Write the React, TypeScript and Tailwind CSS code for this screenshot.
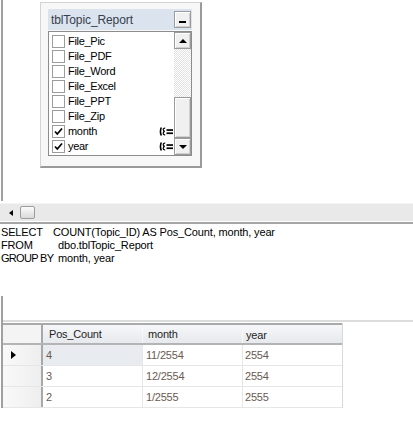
import * as React from "react"

const fields = [
  { name: "File_Pic", checked: false, group: false },
  { name: "File_PDF", checked: false, group: false },
  { name: "File_Word", checked: false, group: false },
  { name: "File_Excel", checked: false, group: false },
  { name: "File_PPT", checked: false, group: false },
  { name: "File_Zip", checked: false, group: false },
  { name: "month", checked: true, group: true },
  { name: "year", checked: true, group: true },
]

const rows = [
  { count: "4", month: "11/2554", year: "2554" },
  { count: "3", month: "12/2554", year: "2554" },
  { count: "2", month: "1/2555", year: "2555" },
]

const btn3d =
  "border border-[#9a9a9a] bg-[#f0f0f0] shadow-[inset_1px_1px_0_#ffffff,inset_-1px_-1px_0_#d0d0d0]"

function CheckMark() {
  return (
    <svg width="9" height="9" viewBox="0 0 9 9">
      <path d="M1 4.5 L3.3 7 L8 1.5" fill="none" stroke="#000" strokeWidth="1.7" />
    </svg>
  )
}

function GroupIcon() {
  return (
    <svg width="14" height="9" viewBox="0 0 14 9">
      <path d="M2.3 0.5 Q0.6 4.5 2.3 8.5" fill="none" stroke="#000" strokeWidth="1.6" />
      <path d="M6.2 1.2 Q4.2 1 4.2 2.6 Q4.2 4.2 5.8 4.3 Q4.2 4.5 4.2 6.3 Q4.2 8 6.2 7.8" fill="none" stroke="#000" strokeWidth="1.2" />
      <rect x="7.5" y="2.2" width="6.5" height="1.7" fill="#000" />
      <rect x="7.5" y="5.4" width="6.5" height="1.7" fill="#000" />
    </svg>
  )
}

function TableWindow() {
  return (
    <div className="h-[166px] w-[162px] border-t border-l border-[#d4d4d4] border-r-2 border-b-2 border-r-[#9a9a9a] border-b-[#9a9a9a] bg-[#f7f7f7] pl-[7px] pt-[6px]">
      <div className="flex h-[21px] w-[144px] items-center justify-between bg-[#dbe4ee] pl-[3px] pr-[1px]">
        <span className="text-[12px] tracking-[-0.1px] text-[#36414d]">tblTopic_Report</span>
        <div className={`flex h-[17px] w-[17px] items-end justify-center pb-[4px] ${btn3d}`}>
          <div className="h-[2px] w-[7px] bg-black" />
        </div>
      </div>
      <div className="mt-px flex h-[125px] w-[144px] border border-[#8c8c8c] bg-white">
        <div className="flex-1 pt-[2px]">
          {fields.map((f) => (
            <div key={f.name} className="flex h-[15px] items-center pl-[3px]">
              <div className="flex h-[13px] w-[13px] items-center justify-center border border-[#9c9c9c] bg-white">
                {f.checked ? <CheckMark /> : null}
              </div>
              <span className="ml-[3px] flex-1 text-[11px] tracking-[-0.3px] text-black">{f.name}</span>
              {f.group ? (
                <span className="mr-[1px] flex">
                  <GroupIcon />
                </span>
              ) : null}
            </div>
          ))}
        </div>
        <div className="flex w-[17px] flex-col">
          <div className={`flex h-[17px] items-center justify-center ${btn3d}`}>
            <div className="h-0 w-0 border-x-[4px] border-b-[4px] border-x-transparent border-b-black" />
          </div>
          <div className="h-[48px] bg-[repeating-conic-gradient(#ffffff_0_25%,#e2e2e2_0_50%)] bg-[length:2px_2px]" />
          <div className={`h-[41px] ${btn3d}`} />
          <div className={`flex flex-1 items-center justify-center ${btn3d}`}>
            <div className="h-0 w-0 border-x-[4px] border-t-[4px] border-x-transparent border-t-black" />
          </div>
        </div>
      </div>
    </div>
  )
}

export default function App() {
  return (
    <div className="h-[421px] w-[413px] overflow-hidden bg-white font-['Liberation_Sans',Arial,sans-serif] leading-none">
      {/* diagram pane */}
      <div className="ml-px h-[201px] border-l-2 border-[#a0a0a0] pl-[37px] pt-[2px]">
        <TableWindow />
      </div>
      <div className="h-[2px]" />

      {/* horizontal scroll bar */}
      <div className="flex h-[18px] items-center border-t border-[#f4f4f4] bg-[#e9e9e9]">
        <div className="ml-[9px] h-0 w-0 border-y-[3px] border-r-[4px] border-y-transparent border-r-black" />
        <div className="ml-[7px] h-[13px] w-[15px] rounded-[2px] border border-[#9c9c9c] bg-gradient-to-b from-[#fbfbfb] to-[#dadada]" />
      </div>
      <div className="h-px bg-white" />
      <div className="h-[2px] bg-[#a6a6a6]" />

      {/* sql pane */}
      <div className="h-[72px] pl-px pt-[2px] text-[11px] leading-[13px] tracking-[-0.15px] text-black">
        <div className="flex whitespace-nowrap">
          <span className="w-[52px] shrink-0">SELECT</span>
          <span>COUNT(Topic_ID) AS Pos_Count, month, year</span>
        </div>
        <div className="flex whitespace-nowrap">
          <span className="w-[57px] shrink-0">FROM</span>
          <span>dbo.tblTopic_Report</span>
        </div>
        <div className="flex whitespace-nowrap">
          <span className="w-[57px] shrink-0 tracking-[-0.7px]">GROUP BY</span>
          <span>month, year</span>
        </div>
      </div>

      {/* results pane */}
      <div className="ml-px h-[112px] border-l-2 border-[#a0a0a0]">
        <div className="h-[24px]" />
        <div className="h-[2px] bg-[#dcdcdc]" />
        <div className="h-px" />
        <div className="w-[340px] border-r border-[#d8d8d8]">
          <div className="h-[2px] bg-[#a9a9a9]" />
          <div className="flex h-[20px] border-b-2 border-[#b4b4b4] bg-gradient-to-b from-[#f6f7f9] to-[#e6e9ed] text-[11px] tracking-[-0.2px] text-[#1e1e1e]">
            <div className="w-[40px] border-r-2 border-[#a8a8a8] bg-[#f4f4f4]" />
            <div className="flex w-[100px] items-center border-r border-[#f8f8f8] pl-[6px]">Pos_Count</div>
            <div className="flex w-[100px] items-center border-r border-[#f8f8f8] pl-[5px]">month</div>
            <div className="flex flex-1 items-center pl-[3px] pt-[2px]">year</div>
          </div>
          {rows.map((r, i) => (
            <div key={i} className="flex h-[21px] border-b border-[#e6e6e6] text-[11px] tracking-[-0.2px] text-[#6b5a52]">
              <div className="flex w-[40px] items-center border-r-2 border-[#a8a8a8] bg-gradient-to-r from-[#f9f9f9] to-[#eeeeee] pl-[8px]">
                {i === 0 ? (
                  <div className="h-0 w-0 border-y-[4px] border-l-[5px] border-y-transparent border-l-black" />
                ) : null}
              </div>
              <div className={`flex w-[100px] items-center border-r border-[#e6e6e6] pl-[3px] ${i === 0 ? "bg-[#e8ecf0]" : ""}`}>
                {r.count}
              </div>
              <div className="flex w-[100px] items-center border-r border-[#e6e6e6] pl-[3px]">{r.month}</div>
              <div className="flex flex-1 items-center pl-[2px]">{r.year}</div>
            </div>
          ))}
        </div>
      </div>
    </div>
  )
}
